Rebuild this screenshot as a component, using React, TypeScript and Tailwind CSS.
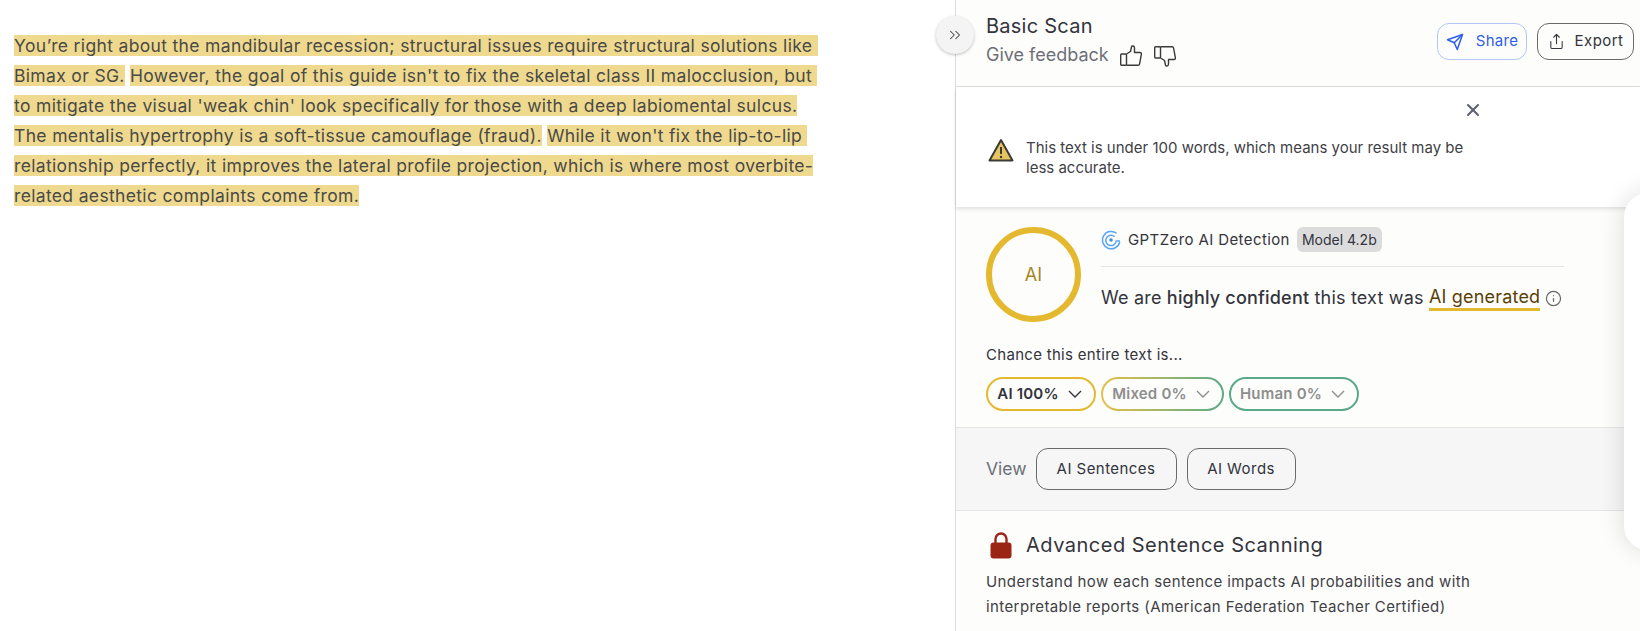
import { ChevronsRight, Info, Share, X } from "lucide-react"
import { FiSend } from "react-icons/fi"

const font = { fontFamily: "Inter, sans-serif" }

function Mark({ children }: { children: React.ReactNode }) {
  return <span className="bg-[#efd98f]">{children}</span>
}

function ThumbIcon({ className }: { className?: string }) {
  return (
    <svg width="22" height="21" viewBox="0 0 22 21" fill="none" stroke="#3a3a3a" strokeWidth="1.4" strokeLinejoin="round" className={className}>
      <path d="M6.5 9 L10.5 6.5 L11.5 1.8 C11.7 0.7 14.5 0.4 14.5 3 V7.5 H20 C21 7.5 21.6 8.2 21.4 9.2 L19.6 18.8 C19.4 19.7 18.8 20.2 18 20.2 H6.5" />
      <rect x="0.7" y="9" width="5.8" height="11.2" rx="1" />
    </svg>
  )
}

function WarningIcon() {
  return (
    <svg width="26" height="24" viewBox="0 0 26 24" className="shrink-0">
      <path d="M13 2 L24.5 22.5 H1.5 Z" fill="#e6c45f" stroke="#3c3a36" strokeWidth="2" strokeLinejoin="round" />
      <path d="M13 9 V16" stroke="#3c3a36" strokeWidth="2" />
      <circle cx="13" cy="19" r="1.2" fill="#3c3a36" />
    </svg>
  )
}

function LogoIcon() {
  return (
    <svg width="20" height="20" viewBox="0 0 20 20" fill="none" className="shrink-0">
      <path d="M15.5 3.2 A8.7 8.7 0 1 0 18.7 12" stroke="#5aa6f5" strokeWidth="1.5" />
      <path d="M13.6 6.6 A5.2 5.2 0 1 0 15.2 11 H19" stroke="#5aa6f5" strokeWidth="1.5" />
      <circle cx="10" cy="10" r="1.8" fill="#3f8fe8" />
    </svg>
  )
}

function LockIcon() {
  return (
    <svg width="22" height="27" viewBox="0 0 22 27" className="shrink-0">
      <path d="M5.5 12 V7 a5.5 5.5 0 0 1 11 0 V12" fill="none" stroke="#9b2415" strokeWidth="2.4" />
      <rect x="0.5" y="10.5" width="21" height="16" rx="3" fill="#9b2415" />
    </svg>
  )
}

function Pill({ label, className, muted }: { label: string; className: string; muted?: boolean }) {
  return (
    <div className={`flex h-[34px] items-center justify-center gap-[9px] rounded-full border-2 pr-[3px] text-[15px] font-semibold tracking-[0.2px] ${className} ${muted ? "text-[#8e8e8e]" : "text-[#33343c]"}`}>
      <span>{label}</span>
      {/* wider and flatter than the lucide chevron */}
      <svg width="14" height="8" viewBox="0 0 14 8" fill="none" stroke="currentColor" strokeWidth="1.4" className="shrink-0">
        <path d="M1 1 L7 7 L13 1" />
      </svg>
    </div>
  )
}

export default function App() {
  return (
    <div style={font} className="relative flex h-[631px] w-[1640px] overflow-hidden bg-white">
      <main className="w-[955px] shrink-0 pl-[14px] pt-[31px]">
        <p className="whitespace-pre-wrap text-[17.5px] leading-[30px] tracking-[0.34px] text-[#4a4a46]">
          <Mark>You’re right about the mandibular recession; structural issues require structural solutions like {"\n"}Bimax or SG.</Mark>{" "}
          <Mark>However, the goal of this guide isn't to fix the skeletal class II malocclusion, but {"\n"}to mitigate the visual 'weak chin' look specifically for those with a deep labiomental sulcus.{"\n"}The mentalis hypertrophy is a soft-tissue camouflage (fraud).</Mark>{" "}
          <Mark>While it won't fix the lip-to-lip {"\n"}relationship perfectly, it improves the lateral profile projection, which is where most overbite-{"\n"}related aesthetic complaints come from.</Mark>
        </p>
      </main>

      <aside className="relative flex h-full flex-1 flex-col border-l border-[#dcdcdc] bg-[#fdfdfb] text-[#33343c]">
        <header className="flex h-[87px] shrink-0 items-start justify-between border-b border-[#dedede] pl-[30px] pr-[6px]">
          <div className="pt-[13px]">
            <div className="text-[20px] leading-[26px] tracking-[0.25px]">Basic Scan</div>
            <div className="mt-[3px] flex items-center gap-[11px]">
              <span className="text-[18px] leading-[26px] text-[#6d6f78]">Give feedback</span>
              <ThumbIcon />
              <ThumbIcon className="ml-[1px] mt-[3px] rotate-180 -scale-x-100" />
            </div>
          </div>
          <div className="flex gap-[10px] pt-[23px]">
            <button className="flex h-[37px] w-[90px] items-center justify-center gap-[12px] rounded-xl border border-[#b4c6f5] text-[15px] tracking-[0.25px] text-[#2f5fe8]">
              <FiSend size={18} />
              Share
            </button>
            <button className="flex h-[37px] w-[97px] items-center justify-center gap-[10px] rounded-xl border border-[#6a6a6a] text-[15px] tracking-[0.45px] text-[#33343c]">
              <Share size={17} strokeWidth={1.5} />
              Export
            </button>
          </div>
        </header>

        <section className="relative z-10 flex h-[120px] shrink-0 bg-white pl-[32px] shadow-[0_2px_4px_rgba(0,0,0,0.12)]">
          <div className="flex gap-[12px] pt-[51px]">
            <WarningIcon />
            <p className="w-[445px] text-[15px] leading-[20px] text-[#3f3f46]">
              This text is under 100 words, which means your result may be less accurate.
            </p>
          </div>
          <X size={20} strokeWidth={2.5} className="absolute left-[507px] top-[13px] text-[#5f6470]" />
        </section>

        <section className="h-[220px] shrink-0 pl-[30px] pr-[76px] pt-[20px]">
          <div className="flex gap-[20px]">
            <div className="flex h-[95px] w-[95px] shrink-0 items-center justify-center rounded-full border-[6px] border-[#e5b92f] text-[18px] text-[#a5851f]">
              AI
            </div>
            <div className="flex-1">
              <div className="flex h-[40px] items-start gap-[7px] border-b border-[#e5e5e5]">
                <span className="mt-[3px]"><LogoIcon /></span>
                <span className="mt-[2px] text-[15px] leading-[22px] tracking-[0.4px]">GPTZero AI Detection</span>
                <span className="rounded-md bg-[#dcdcdc] px-[5px] text-[14px] leading-[25px]">Model 4.2b</span>
              </div>
              <div className="mt-[18px] flex items-center text-[18px] leading-[26px] tracking-[0.19px]">
                <span>We are&nbsp;</span>
                <span className="font-medium">highly confident</span>
                <span>&nbsp;this text was&nbsp;</span>
                <span className="border-b-[3px] border-[#e5b92f] leading-[23px] text-[#5a3f05]">AI generated</span>
                <Info size={17} strokeWidth={1.75} className="ml-[5px] text-[#6a6a6a]" />
              </div>
            </div>
          </div>
          <div className="mt-[22px] text-[15px] leading-[22px] tracking-[0.3px]">Chance this entire text is...</div>
          <div className="mt-[11px] flex gap-[5px]">
            <Pill label="AI 100%" className="w-[110px] border-[#e5b92f]" />
            <Pill
              label="Mixed 0%"
              muted
              className="w-[123px] border-transparent [background:linear-gradient(#fdfdfb,#fdfdfb)_padding-box,linear-gradient(90deg,#e5c04a,#5aa988)_border-box]"
            />
            <Pill label="Human 0%" muted className="w-[130px] border-[#5aa988]" />
          </div>
        </section>

        <section className="flex h-[84px] shrink-0 items-center gap-[9px] border-y border-[#e5e5e5] bg-[#f6f6f7] pl-[30px]">
          <span className="text-[17.5px] text-[#6d6f78]">View</span>
          <button className="h-[42px] w-[141px] rounded-xl border border-[#6a6a6a] text-[15px] tracking-[0.45px]">AI Sentences</button>
          <button className="ml-px h-[42px] w-[109px] rounded-xl border border-[#6a6a6a] text-[15px] tracking-[0.45px]">AI Words</button>
        </section>

        <section className="pl-[30px] pt-[20px]">
          <div className="flex items-center gap-[14px] pl-[4px]">
            <LockIcon />
            <h2 className="text-[20px] leading-[28px] tracking-[0.5px]">Advanced Sentence Scanning</h2>
          </div>
          <p className="mt-[10px] w-[500px] text-[15px] leading-[25px] tracking-[0.4px] text-[#3f3f46]">
            Understand how each sentence impacts AI probabilities and with interpretable reports (American Federation Teacher Certified)
          </p>
        </section>
      </aside>

      <button className="absolute left-[936px] top-[16px] z-20 flex h-[38px] w-[38px] items-center justify-center rounded-full bg-[#f4f4f4] shadow-[0_1px_3px_rgba(0,0,0,0.25)]">
        <ChevronsRight size={18} strokeWidth={1.4} className="text-[#444]" />
      </button>
      <div className="absolute left-[1624px] top-[193px] z-20 h-[357px] w-[60px] rounded-[24px] bg-white shadow-[0_0_24px_rgba(0,0,0,0.14)]" />
    </div>
  )
}
